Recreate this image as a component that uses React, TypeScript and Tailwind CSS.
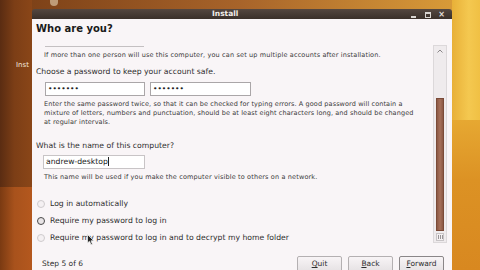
import React from "react";

const font = { fontFamily: '"DejaVu Sans", "Liberation Sans", sans-serif' };

function Radio({ checked }: { checked?: boolean }) {
  return (
    <span
      className={
        "inline-block w-[8px] h-[8px] rounded-full border " +
        (checked
          ? "border-[#4a4a4a] border-[1.5px] bg-[#e8e4e6]"
          : "border-[#cfcbcd] bg-[#f4f0f2]")
      }
    />
  );
}

function Button({ label, focused }: { label: string; focused?: boolean }) {
  return (
    <div
      className={
        "w-[45px] h-[16px] rounded-[2px] border flex items-start justify-center pt-[1px] text-[7.5px] leading-[11px] text-[#2e2e2e] bg-[linear-gradient(180deg,#f8f4f6,#e6e2e4)] " +
        (focused ? "border-[#8a8688]" : "border-[#b4b0b2]")
      }
    >
      <span>
        <span className="underline">{label[0]}</span>
        {label.slice(1)}
      </span>
    </div>
  );
}

export default function App() {
  return (
    <div className="w-[480px] h-[270px] overflow-hidden flex relative" style={font}>
      {/* left desktop strip */}
      <div className="w-[32px] h-full flex flex-col relative">
        <div className="h-[187px] bg-[linear-gradient(90deg,#5a2c12,#7c3e16_45%,#8a4618)]" />
        <div className="flex-1 bg-[linear-gradient(90deg,#7a3a12,#a8521c_45%,#b4581e)]" />
        <span className="absolute left-[16px] top-[61px] text-[7px] leading-[9px] text-[#f2e6dc]">
          Inst
        </span>
      </div>

      {/* center column */}
      <div className="w-[420px] h-full flex flex-col bg-[linear-gradient(90deg,#7e4218,#a8642a_50%,#d89a38)]">
        <div className="h-[9px] relative">
          <div className="absolute left-[18px] top-0 w-[8px] h-[6px] rounded-b-full bg-[#d8c0a0] opacity-70" />
        </div>
        <div className="flex-1 flex flex-col rounded-t-[3px] overflow-hidden">
          {/* title bar */}
          <div className="h-[12px] bg-[linear-gradient(180deg,#544740,#3a302a)] flex items-center relative">
            <span className="ml-[180px] text-[7.5px] font-bold text-[#f2eeea] leading-[10px]">
              Install
            </span>
            <div className="absolute right-[6px] top-[2px] flex items-center gap-[5px]">
              <span className="w-[9px] h-[8px] flex items-end justify-center">
                <span className="w-[5px] h-[2px] bg-[#d8d4d0] mb-[1px]" />
              </span>
              <span className="w-[9px] h-[8px] flex items-center justify-center">
                <span className="w-[6px] h-[6px] border border-[#d8d4d0] border-t-2" />
              </span>
              <span className="w-[9px] h-[8px] flex items-center justify-center text-[#e0dcd8] text-[8px] font-bold leading-[8px]">
                ×
              </span>
            </div>
          </div>

          {/* content */}
          <div className="flex-1 bg-[#f9f5f7] flex flex-col relative text-[#2e2e2e]">
            <div className="pl-[4px] pt-[4px] h-[25px] text-[10px] font-bold leading-[12px] text-[#1a1a1a]">
              Who are you?
            </div>

            <div className="flex h-[199px]">
              <div className="flex-1 pl-[4px] flex flex-col">
                <div className="ml-[9px] mt-[2px] w-[99px] h-px bg-[#c4c0c2]" />
                <div className="ml-[8px] mt-[4px] text-[6.5px] tracking-[0.15px] leading-[8px] text-[#3a3a3a] whitespace-nowrap">
                  If more than one person will use this computer, you can set up multiple accounts after installation.
                </div>
                <div className="mt-[8px] text-[7.7px] leading-[10px]">
                  Choose a password to keep your account safe.
                </div>
                <div className="mt-[5px] ml-[9px] flex gap-[5px]">
                  <div className="w-[100px] h-[14px] bg-white border border-[#aaa6a8] flex items-center pl-[2px] text-[7.5px] leading-[10px] text-[#222]">
                    •••••••
                  </div>
                  <div className="w-[101px] h-[14px] bg-white border border-[#aaa6a8] flex items-center pl-[2px] text-[7.5px] leading-[10px] text-[#222]">
                    •••••••
                  </div>
                </div>
                <div className="ml-[8px] mt-[4px] w-[372px] text-[6.5px] tracking-[0.1px] leading-[9px] text-[#3a3a3a]">
                  Enter the same password twice, so that it can be checked for typing errors. A good password will contain a mixture of letters, numbers and punctuation, should be at least eight characters long, and should be changed at regular intervals.
                </div>
                <div className="mt-[14px] text-[7.7px] leading-[10px]">
                  What is the name of this computer?
                </div>
                <div className="mt-[4px] ml-[7px] w-[102px] h-[15px] bg-white border border-[#c8c4c6] flex items-center pl-[2px] text-[7.7px] leading-[10px] text-[#222]">
                  andrew-deskto<span>p</span>
                  <span className="w-px h-[9px] bg-[#222]" />
                </div>
                <div className="ml-[8px] mt-[4px] text-[6.5px] tracking-[0.15px] leading-[8px] text-[#3a3a3a]">
                  This name will be used if you make the computer visible to others on a network.
                </div>
                <div className="mt-[17px] flex flex-col gap-[6px] text-[7.7px] leading-[11px]">
                  <div className="flex items-center gap-[5px] pl-[1px]">
                    <Radio />
                    <span>Log in automatically</span>
                  </div>
                  <div className="flex items-center gap-[5px] pl-[1px]">
                    <Radio checked />
                    <span>Require my password to log in</span>
                  </div>
                  <div className="flex items-center gap-[5px] pl-[1px]">
                    <Radio />
                    <span>Require my password to log in and to decrypt my home folder</span>
                  </div>
                </div>
              </div>

              {/* scrollbar */}
              <div className="w-[14px] mr-[5px] mt-[1px] border border-[#dcd8da] bg-[#efebed] flex flex-col items-center">
                <div className="h-[10px] w-full flex items-center justify-center text-[#8a8688]">
                  <svg width="6" height="4" viewBox="0 0 6 4">
                    <path d="M0.5 3.5 L3 1 L5.5 3.5" stroke="#8a8688" strokeWidth="1" fill="none" />
                  </svg>
                </div>
                <div className="mt-[42px] w-[8px] h-[133px] bg-[linear-gradient(90deg,#8c5844,#a6705a_50%,#8c5844)] border border-[#7a4a38]" />
                <div className="mt-[2px] w-[8px] h-[8px] border border-[#c8c4c6] bg-[#f4f0f2] flex items-center justify-center gap-[1px]">
                  <span className="w-px h-[4px] bg-[#9a9698]" />
                  <span className="w-px h-[4px] bg-[#9a9698]" />
                  <span className="w-px h-[4px] bg-[#9a9698]" />
                </div>
              </div>
            </div>

            <div className="flex items-start mt-[13px]">
              <div className="pl-[10px] pt-[3px] text-[7.5px] leading-[10px]">Step 5 of 6</div>
              <div className="ml-auto mr-[8px] flex gap-[6px]">
                <Button label="Quit" />
                <Button label="Back" />
                <Button label="Forward" focused />
              </div>
            </div>

            {/* mouse cursor */}
            <svg
              className="absolute left-[55px] top-[215px]"
              width="8"
              height="12"
              viewBox="0 0 8 12"
            >
              <path d="M0.5 0.5 L0.5 9 L2.5 7.2 L4 10.8 L5.4 10.2 L4 6.8 L6.8 6.8 Z" fill="#222" stroke="#eee" strokeWidth="0.8" />
            </svg>
          </div>
        </div>
      </div>

      {/* right desktop strip */}
      <div className="flex-1 h-full flex flex-col">
        <div className="h-[120px] bg-[linear-gradient(90deg,#e8b038,#f4c850_60%,#f0c044)]" />
        <div className="flex-1 bg-[linear-gradient(180deg,#e6a832,#dc9224_40%,#d88820)]" />
      </div>
    </div>
  );
}
